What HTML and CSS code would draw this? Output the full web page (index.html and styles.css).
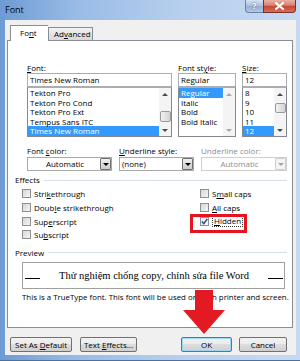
FILE: index.html
```html
<!DOCTYPE html>
<html>
<head>
<meta charset="utf-8">
<link rel="stylesheet" href="styles.css">
</head>
<body>
<div class="window">
  <div class="titlebar">
    <span class="title">Font</span>
    <div class="caption">
      <span class="cap-help">?</span>
      <span class="cap-close"><svg width="9" height="8" viewBox="0 0 9 8"><path d="M1 1 L8 7 M8 1 L1 7" stroke="#fff" stroke-width="2" stroke-linecap="square"/></svg></span>
    </div>
  </div>
  <div class="client">
    <div class="tabs">
      <div class="tab active">Fo<u>n</u>t</div>
      <div class="tab">Ad<u>v</u>anced</div>
    </div>
    <div class="panel">
      <div class="fontgrid">
        <div class="col">
          <div class="lbl"><u>F</u>ont:</div>
          <div class="input">Times New Roman</div>
          <div class="list">
            <div class="items">
              <div class="item">Tekton Pro</div>
              <div class="item">Tekton Pro Cond</div>
              <div class="item">Tekton Pro Ext</div>
              <div class="item">Tempus Sans ITC</div>
              <div class="item sel">Times New Roman</div>
            </div>
            <div class="sb">
              <div class="sb-up"></div>
              <div class="sb-track"><div class="thumb thumb-font"></div></div>
              <div class="sb-down"></div>
            </div>
          </div>
        </div>
        <div class="col">
          <div class="lbl">Font st<u>y</u>le:</div>
          <div class="input">Regular</div>
          <div class="list">
            <div class="items">
              <div class="item sel">Regular</div>
              <div class="item">Italic</div>
              <div class="item">Bold</div>
              <div class="item">Bold Italic</div>
            </div>
            <div class="sb sb-off">
              <div class="sb-up"></div>
              <div class="sb-track"></div>
              <div class="sb-down"></div>
            </div>
          </div>
        </div>
        <div class="col">
          <div class="lbl"><u>S</u>ize:</div>
          <div class="input">12</div>
          <div class="list">
            <div class="items">
              <div class="item">8</div>
              <div class="item">9</div>
              <div class="item">10</div>
              <div class="item">11</div>
              <div class="item sel">12</div>
            </div>
            <div class="sb">
              <div class="sb-up"></div>
              <div class="sb-track"><div class="thumb thumb-size"></div></div>
              <div class="sb-down"></div>
            </div>
          </div>
        </div>
      </div>

      <div class="colorgrid">
        <div class="col">
          <div class="lbl">Font <u>c</u>olor:</div>
          <div class="select"><span class="sel-text center">Automatic</span><span class="dd"></span></div>
        </div>
        <div class="col">
          <div class="lbl"><u>U</u>nderline style:</div>
          <div class="select"><span class="sel-text">(none)</span><span class="dd"></span></div>
        </div>
        <div class="col">
          <div class="lbl disabled">Underline color:</div>
          <div class="select off"><span class="sel-text center">Automatic</span><span class="dd"></span></div>
        </div>
      </div>

      <div class="head"><span>Effects</span><span class="rule"></span></div>
      <div class="checks">
        <div class="chk"><span class="box"></span><span>Stri<u>k</u>ethrough</span></div>
        <div class="chk"><span class="box"></span><span>S<u>m</u>all caps</span></div>
        <div class="chk"><span class="box"></span><span>Doub<u>l</u>e strikethrough</span></div>
        <div class="chk"><span class="box"></span><span><u>A</u>ll caps</span></div>
        <div class="chk"><span class="box"></span><span>Sup<u>e</u>rscript</span></div>
        <div class="chk"><span class="box checked"><svg width="7" height="7" viewBox="0 0 7 7"><path d="M0.8 3.6 L2.8 5.6 L6.3 1" fill="none" stroke="#2b4a8a" stroke-width="1.4"/></svg></span><span class="focus"><u>H</u>idden</span></div>
        <div class="chk"><span class="box"></span><span>Su<u>b</u>script</span></div>
      </div>

      <div class="head head-preview"><span>Preview</span><span class="rule"></span></div>
      <div class="preview">
        <span class="pline"></span>
        <span class="ptext">Thử nghiệm chống copy, chỉnh sửa file Word</span>
        <span class="pline"></span>
      </div>
      <div class="note">This is a TrueType font. This font will be used on both printer and screen.</div>
    </div>
    <div class="buttons">
      <div class="btn b-default">Set As <u>D</u>efault</div>
      <div class="btn b-effects">Text <u>E</u>ffects...</div>
      <div class="spacer"></div>
      <div class="btn b-ok">OK</div>
      <div class="btn b-cancel">Cancel</div>
    </div>
  </div>
</div>
<div class="mark-box"></div>
<svg class="mark-arrow" width="43" height="45" viewBox="0 0 43 45"><polygon points="12,0 30,0 30,20 42,20 21,44 0,20 12,20" fill="#e41a22"/></svg>
</body>
</html>
```
FILE: styles.css
```css
* { box-sizing: border-box; }
html, body { margin: 0; padding: 0; }
body {
  width: 300px;
  height: 361px;
  overflow: hidden;
  position: relative;
  font-family: "Open Sans", "Noto Sans", sans-serif;
  font-size: 8px;
  color: #000;
}
u { text-decoration: underline; text-underline-offset: 1px; }

.window {
  width: 300px;
  height: 361px;
  display: flex;
  flex-direction: column;
  padding: 0 4px 5px 5px;
  background: linear-gradient(90deg, #6e9bd4 0%, #98bbe6 25%, #b7cfee 60%, #c6d9f1 100%);
  border-bottom: 1px solid #4f6f9c;
}
.titlebar {
  height: 20px;
  display: flex;
  justify-content: space-between;
  align-items: flex-start;
}
.title {
  padding-top: 4px;
  font-size: 9px;
  line-height: 11px;
}
.caption { display: flex; height: 13px; }
.cap-help {
  width: 18px;
  height: 13px;
  border: 1px solid #6a83a6;
  border-top: none;
  border-right: none;
  border-radius: 0 0 0 4px;
  background: linear-gradient(#d6e3f3, #a9c0dd 50%, #93aed2 51%, #b4cae6);
  color: #fff;
  font-weight: bold;
  font-size: 9px;
  line-height: 12px;
  text-align: center;
  text-shadow: 0 0 2px #33507a;
}
.cap-close {
  width: 33px;
  height: 13px;
  border: 1px solid #7a2f28;
  border-top: none;
  border-radius: 0 0 4px 0;
  background: linear-gradient(#eab2a6, #d7806f 45%, #c24632 50%, #d3705c);
  display: flex;
  align-items: center;
  justify-content: center;
}

.client {
  flex: 1;
  background: #f0f0f0;
  padding: 5px 3px 0 2px;
  display: flex;
  flex-direction: column;
}
.tabs {
  display: flex;
  align-items: flex-end;
  padding-left: 3px;
  height: 15px;
  position: relative;
  z-index: 1;
}
.tab {
  height: 13px;
  width: 45px;
  border: 1px solid #898c95;
  border-bottom: none;
  background: linear-gradient(#f3f3f3, #e3e3e3 50%, #d9d9d9);
  line-height: 12px;
  padding-left: 5px;
}
.tab.active {
  width: 38px;
  height: 16px;
  margin-bottom: -1px;
  background: #fff;
  padding-left: 9px;
  line-height: 14px;
  border-right: none;
}
.panel {
  height: 288px;
  background: #fff;
  border: 1px solid #898c95;
  padding: 0 5px 0 7px;
}

.fontgrid {
  margin: 21px 0 0 12px;
  display: grid;
  grid-template-columns: 145px 58px 45px;
  column-gap: 6px;
}
.lbl { height: 11px; line-height: 11px; }
.lbl.disabled { color: #8d8d8d; }
.input {
  height: 14px;
  border: 1px solid #abadb3;
  padding-left: 2px;
  line-height: 12px;
}
.list {
  height: 50px;
  border: 1px solid #828790;
  border-top-color: #abadb3;
  display: flex;
}
.items { flex: 1; }
.item {
  height: 9.6px;
  line-height: 9.6px;
  padding-left: 2px;
  white-space: nowrap;
}
.item.sel { background: #3399ff; color: #fff; }
.sb {
  width: 12px;
  background: #f4f4f4;
  display: flex;
  flex-direction: column;
}
.sb-up, .sb-down {
  height: 12px;
  display: flex;
  align-items: center;
  justify-content: center;
}
.sb-up::before {
  content: "";
  border-left: 3px solid transparent;
  border-right: 3px solid transparent;
  border-bottom: 3px solid #4a4a4a;
}
.sb-down::before {
  content: "";
  border-left: 3px solid transparent;
  border-right: 3px solid transparent;
  border-top: 3px solid #4a4a4a;
}
.sb-off .sb-up::before { border-bottom-color: #a8a8a8; }
.sb-off .sb-down::before { border-top-color: #a8a8a8; }
.sb-track { flex: 1; display: flex; flex-direction: column; align-items: center; }
.thumb {
  width: 11px;
  border: 1px solid #9a9a9a;
  border-radius: 2px;
  background: linear-gradient(90deg, #f2f2f2, #e2e2e2 50%, #d4d4d4);
}
.thumb-font { margin-top: 11px; height: 11px; }
.thumb-size { margin-top: 3px; height: 10px; }

.colorgrid {
  margin: 8px 0 0 12px;
  display: grid;
  grid-template-columns: 85px 75px 86px;
  column-gap: 7px;
}
.select {
  margin-top: 1px;
  height: 14px;
  border: 1px solid #a9a9a9;
  display: flex;
  align-items: stretch;
}
.sel-text { flex: 1; line-height: 12px; padding-left: 2px; }
.sel-text.center { text-align: center; }
.dd {
  width: 11px;
  border: 1px solid #707070;
  border-radius: 1px;
  background: linear-gradient(#f1f1f1, #dcdcdc 50%, #cdcdcd);
  display: flex;
  align-items: center;
  justify-content: center;
}
.dd::before {
  content: "";
  border-left: 3px solid transparent;
  border-right: 3px solid transparent;
  border-top: 3px solid #000;
}
.select.off { border-color: #cfcfcf; color: #8d8d8d; }
.select.off .dd { border-color: #cfcfcf; background: #f4f4f4; }
.select.off .dd::before { border-top-color: #a5a5a5; }

.head {
  margin-top: 4px;
  height: 10px;
  line-height: 10px;
  display: flex;
  align-items: center;
}
.rule { flex: 1; height: 1px; background: #d5dfe5; margin-left: 4px; }
.head-preview { margin-top: 6px; }

.checks {
  margin: 2px 0 0 7px;
  display: grid;
  grid-template-columns: 178px 1fr;
  grid-auto-rows: 13.7px;
}
.chk { display: flex; align-items: center; gap: 3px; line-height: 11px; }
.box {
  width: 9px;
  height: 9px;
  border: 1px solid #8e8f8f;
  background: linear-gradient(135deg, #d4d6d9, #f6f6f6);
  display: flex;
  align-items: center;
  justify-content: center;
}
.box.checked { background: linear-gradient(135deg, #e4e6e9, #fafafa); }
.focus { border: 1px dotted #333; padding: 0 1px; line-height: 10px; }

.preview {
  margin: 4px 0 0 7px;
  width: 263px;
  height: 27px;
  border: 1px solid #a0a0a0;
  display: flex;
  align-items: center;
  padding: 0 1px 0 2px;
}
.pline { width: 15px; height: 1px; background: #000; margin-top: 7px; }
.ptext {
  flex: 1;
  text-align: center;
  font-family: "Liberation Serif", serif;
  font-size: 10.5px;
  white-space: nowrap;
}
.note {
  margin: 3px 0 0 7px;
  height: 10px;
  line-height: 10px;
  font-size: 7.88px;
  white-space: nowrap;
}

.buttons {
  margin-top: 9px;
  height: 15px;
  display: flex;
  gap: 8px;
  padding-left: 3px;
  padding-right: 6px;
}
.spacer { flex: 1; }
.btn {
  height: 15px;
  border: 1px solid #707070;
  border-radius: 2px;
  background: linear-gradient(#f2f2f2, #ebebeb 48%, #dddddd 50%, #cfcfcf);
  line-height: 13px;
  text-align: center;
  white-space: nowrap;
}
.b-default { width: 62px; }
.b-effects { width: 57px; }
.b-ok {
  width: 51px;
  border-color: #3c7fb1;
  box-shadow: inset 0 0 0 1px #9fd6f4;
  margin-right: -1px;
}
.b-cancel { width: 48px; }

.mark-box {
  position: absolute;
  left: 190px;
  top: 214px;
  width: 57px;
  height: 19px;
  border: 3px solid #e5141e;
}
.mark-arrow {
  position: absolute;
  left: 183px;
  top: 290px;
}
```
